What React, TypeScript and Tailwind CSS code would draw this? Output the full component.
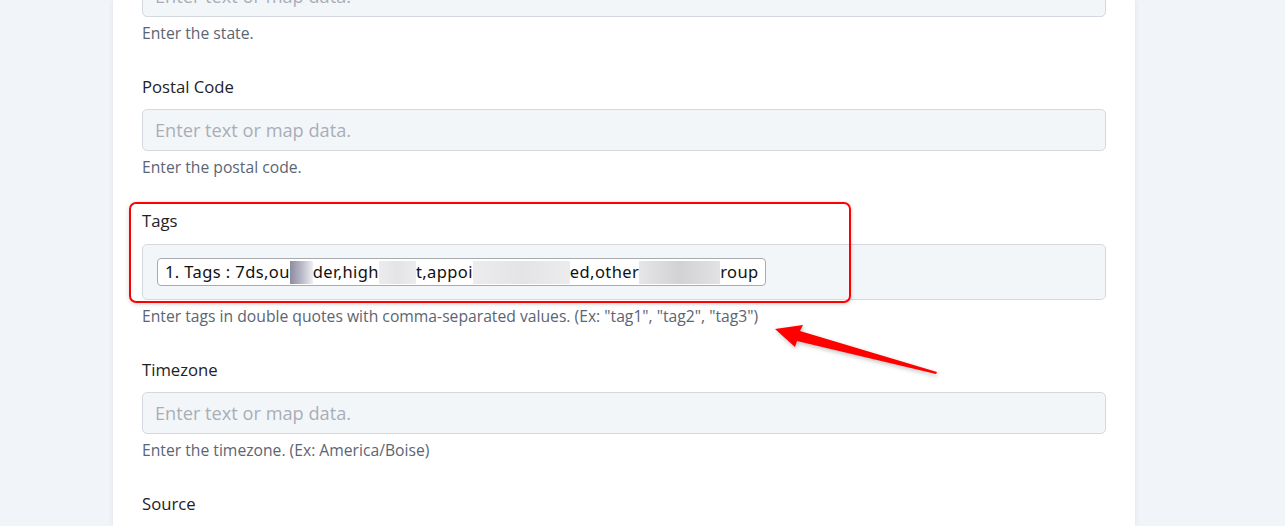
import React from 'react';

interface Field {
  label: string;
  help: string;
}

const fields: Field[] = [
  { label: 'State', help: 'Enter the state.' },
  { label: 'Postal Code', help: 'Enter the postal code.' },
];

const lowerFields: Field[] = [
  { label: 'Timezone', help: 'Enter the timezone. (Ex: America/Boise)' },
];

const font = { fontFamily: '"Open Sans", "Noto Sans", sans-serif' };

function TextField({ label, help }: Field) {
  return (
    <div className="flex flex-col">
      <label className="text-[16.7px] leading-[24px] text-[#1e2227] mb-[10px]">{label}</label>
      <input
        readOnly
        placeholder="Enter text or map data."
        className="h-[42px] w-full rounded-[5px] border border-[#d4d9df] bg-[#f3f6f9] px-[12px] text-[18.2px] outline-none placeholder:text-[#a9aeb6]"
      />
      <p className="mt-[5px] text-[15.7px] leading-[22px] text-[#5b6573]">{help}</p>
    </div>
  );
}

// blurred-out pieces inside the tag chip
function Smudge({ w, tone }: { w: number; tone: 'dark' | 'light' | 'mid' }) {
  const cls =
    tone === 'dark'
      ? 'bg-linear-to-r from-[#8d8ba0] via-[#b9b8c6] to-[#eeeef2]'
      : tone === 'mid'
        ? 'bg-linear-to-r from-[#e6e6e9] via-[#d2d2d4] to-[#e2e2e4]'
        : 'bg-linear-to-r from-[#ececef] via-[#e4e4e7] to-[#ececee]';
  return <span className={`inline-block h-[23px] ${cls}`} style={{ width: w }} />;
}

function TagsField() {
  return (
    <div className="relative flex flex-col">
      {/* highlight frame */}
      <div className="pointer-events-none absolute left-[-13px] top-[-7px] h-[101px] w-[722px] rounded-[7px] border-2 border-[#ff0000] shadow-[0_1px_4px_rgba(0,0,0,0.18)]" />
      <label className="text-[16.7px] leading-[24px] text-[#1e2227] mb-[11px]">Tags</label>
      <div className="flex h-[56px] items-center rounded-[5px] border border-[#d4d9df] bg-[#f3f6f9] px-[14px]">
        <div
          className="flex h-[28px] items-center rounded-[4px] border border-[#a8abb0] bg-white pl-[7px] pr-[6px] text-[16.5px] tracking-[0.4px] text-[#111] whitespace-nowrap"
          style={{ fontFamily: '"Noto Sans", "Open Sans", sans-serif' }}
        >
          <span>1. Tags : 7ds,ou</span>
          <Smudge w={23} tone="dark" />
          <span>der,high</span>
          <Smudge w={37} tone="light" />
          <span>t,appoi</span>
          <Smudge w={97} tone="light" />
          <span>ed,other</span>
          <Smudge w={81} tone="mid" />
          <span>roup</span>
        </div>
      </div>
      <p className="mt-[5px] text-[15.7px] leading-[22px] text-[#5b6573]">
        Enter tags in double quotes with comma-separated values. (Ex: "tag1", "tag2", "tag3")
      </p>
    </div>
  );
}

export default function App() {
  return (
    <div className="relative h-[526px] overflow-hidden bg-[#f1f5f9]" style={font}>
      <div className="ml-[113px] flex h-full w-[1022px] flex-col bg-white shadow-[0_0_6px_rgba(0,0,0,0.08)]">
        <div className="-mt-[59px] flex flex-col gap-[31px] px-[29px]">
          {fields.map((f) => (
            <TextField key={f.label} {...f} />
          ))}
          <TagsField />
          {lowerFields.map((f) => (
            <TextField key={f.label} {...f} />
          ))}
          <div className="flex flex-col">
            <label className="text-[16.7px] leading-[24px] text-[#1e2227] mb-[10px]">Source</label>
            <input
              readOnly
              placeholder="Enter text or map data."
              className="h-[42px] w-full rounded-[5px] border border-[#d4d9df] bg-[#f3f6f9] px-[12px] text-[18.2px] outline-none placeholder:text-[#a9aeb6]"
            />
          </div>
        </div>
      </div>

      {/* pointer arrow */}
      <svg
        className="pointer-events-none absolute left-[770px] top-[320px]"
        width="175"
        height="60"
        viewBox="0 0 175 60"
        style={{ filter: 'drop-shadow(1px 2px 2px rgba(0,0,0,0.25))' }}
      >
        <polygon points="5,9 33,5 30,11 167,52 166,54 27,21 25,27" fill="#ff0000" />
      </svg>
    </div>
  );
}
